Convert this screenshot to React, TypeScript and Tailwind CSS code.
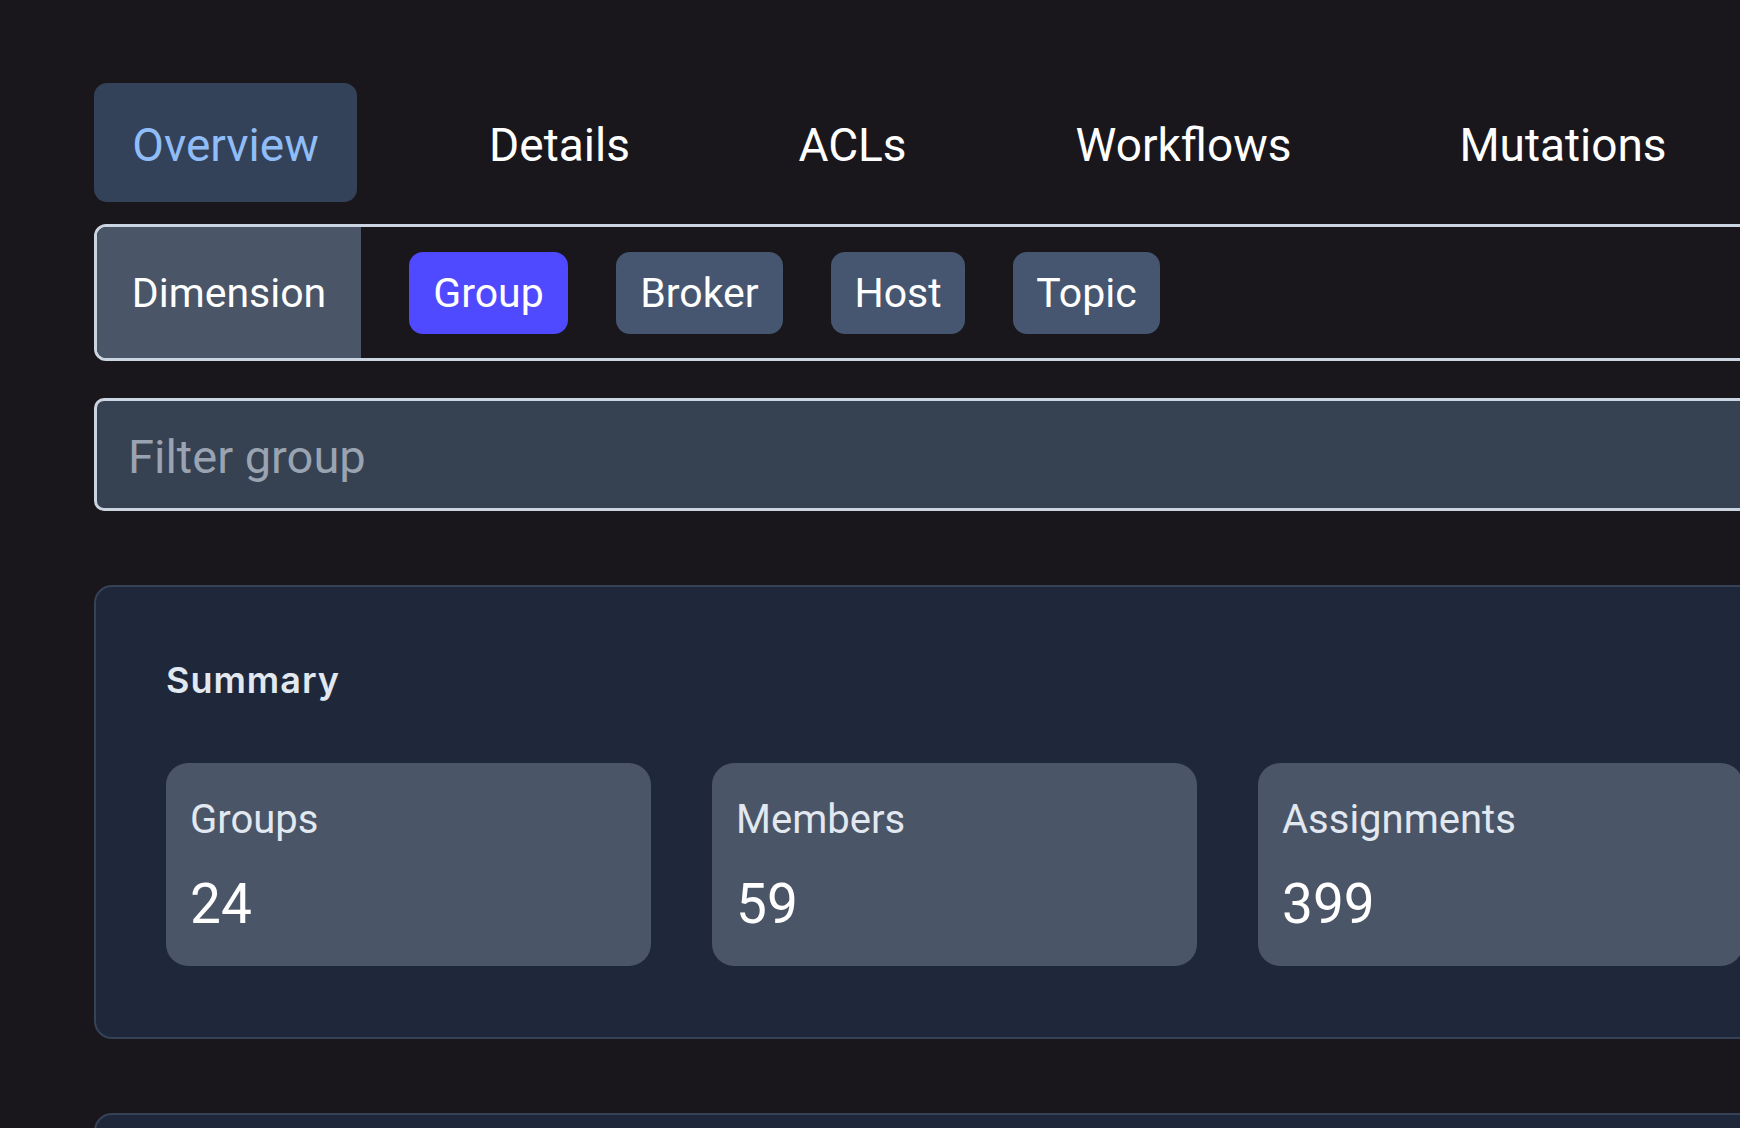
import React from 'react';

const tabs = [
  { label: 'Overview', width: 'w-[263px]', active: true },
  { label: 'Details', width: 'w-[215px]', active: false },
  { label: 'ACLs', width: 'w-[181px]', active: false },
  { label: 'Workflows', width: 'w-[291px]', active: false },
  { label: 'Mutations', width: 'w-[278px]', active: false },
];

const dimensions = [
  { label: 'Group', width: 'w-[159px]', active: true },
  { label: 'Broker', width: 'w-[167px]', active: false },
  { label: 'Host', width: 'w-[134px]', active: false },
  { label: 'Topic', width: 'w-[147px]', active: false },
];

const stats = [
  { label: 'Groups', value: 24 },
  { label: 'Members', value: 59 },
  { label: 'Assignments', value: 399 },
];

function StatCard({ label, value }: { label: string; value: number }) {
  return (
    <div className="w-[485px] h-[203px] shrink-0 rounded-[22px] bg-[#4a5568] px-[24px] pt-[33px]">
      <div className="text-[40px] leading-[48px] text-[#e2e8f0]">{label}</div>
      <div className="mt-[27px] text-[55px] leading-[66px] text-white">{value}</div>
    </div>
  );
}

export default function App() {
  return (
    <div className="h-screen w-full overflow-hidden bg-[#19171c] font-['Roboto',sans-serif]">
      <div className="w-[1800px] pl-[94px] pt-[83px]">
        {/* top tabs */}
        <nav className="flex gap-[95px]">
          {tabs.map((t) => (
            <button
              key={t.label}
              className={
                t.active
                  ? `${t.width} h-[119px] flex items-center justify-center pt-[5px] rounded-[13px] bg-[#334259] text-[46px] text-[#90bdf7]`
                  : `${t.width} h-[119px] flex items-center justify-center pt-[5px] text-[46px] text-white`
              }
            >
              {t.label}
            </button>
          ))}
        </nav>

        {/* dimension selector */}
        <div className="mt-[22px] flex h-[137px] items-center overflow-hidden rounded-[12px] border-[3px] border-[#cbd5e1]">
          <div className="flex h-full w-[264px] items-center justify-center pt-[3px] bg-[#4a5568] text-[41px] text-white">
            Dimension
          </div>
          <div className="ml-[48px] flex gap-[48px]">
            {dimensions.map((d) => (
              <button
                key={d.label}
                className={
                  d.active
                    ? `${d.width} h-[82px] pt-[3px] rounded-[14px] bg-[#4f49ff] text-[41px] text-white`
                    : `${d.width} h-[82px] pt-[3px] rounded-[14px] bg-[#465670] text-[41px] text-white`
                }
              >
                {d.label}
              </button>
            ))}
          </div>
        </div>

        {/* filter */}
        <input
          placeholder="Filter group"
          className="mt-[37px] block h-[113px] w-full rounded-[10px] border-[3px] border-[#cbd5e1] bg-[#364152] pl-[31px] pt-[4px] text-[47px] text-white outline-none placeholder:text-[#9aa3b1]"
        />

        {/* summary */}
        <section className="mt-[74px] h-[454px] rounded-[18px] border-2 border-[#364256] bg-[#1f273a] px-[70px] pt-[71px]">
          <h2 className="font-['Inter',sans-serif] text-[36px] font-semibold leading-[44px] tracking-[1px] text-[#e2e8f0]">
            Summary
          </h2>
          <div className="mt-[61px] flex gap-[61px]">
            {stats.map((s) => (
              <StatCard key={s.label} label={s.label} value={s.value} />
            ))}
          </div>
        </section>

        <section className="mt-[74px] h-[200px] rounded-[18px] border-2 border-[#364256] bg-[#1f273a]" />
      </div>
    </div>
  );
}
